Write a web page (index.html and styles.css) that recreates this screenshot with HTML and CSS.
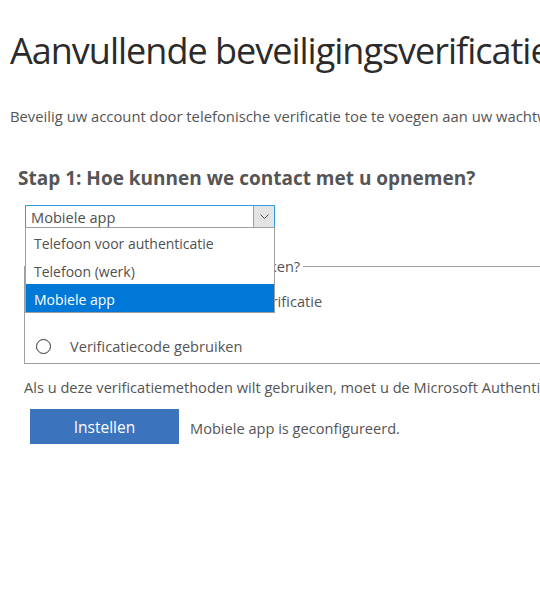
FILE: index.html
```html
<!DOCTYPE html>
<html lang="nl">
<head>
<meta charset="utf-8">
<title>Aanvullende beveiligingsverificatie</title>
<link rel="stylesheet" href="styles.css">
</head>
<body>
<main class="page">
  <h1 class="title">Aanvullende beveiligingsverificatie</h1>
  <p class="intro">Beveilig uw account door telefonische verificatie toe te voegen aan uw wachtwoord. Bekijk de video om te zien hoe u uw account beveiligt</p>

  <section class="step">
    <h2 class="step-title">Stap 1: Hoe kunnen we contact met u opnemen?</h2>

    <div class="picker">
      <div class="select">
        <span class="select-value">Mobiele app</span>
        <span class="select-arrow">
          <svg width="9" height="5" viewBox="0 0 9 5"><path d="M0.5 0.5l4 4 4-4" fill="none" stroke="#555" stroke-width="1"/></svg>
        </span>
      </div>
      <ul class="options">
        <li class="option">Telefoon voor authenticatie</li>
        <li class="option">Telefoon (werk)</li>
        <li class="option selected">Mobiele app</li>
      </ul>
    </div>

    <fieldset class="methods">
      <legend class="methods-legend">Hoe wilt u de mobiele app gebruiken?</legend>
      <label class="radio-row"><span class="radio"></span>Meldingen ontvangen voor verificatie</label>
      <label class="radio-row"><span class="radio"></span>Verificatiecode gebruiken</label>
    </fieldset>

    <p class="note">Als u deze verificatiemethoden wilt gebruiken, moet u de Microsoft Authenticator-app instellen.</p>

    <div class="actions">
      <button class="btn">Instellen</button>
      <span class="status">Mobiele app is geconfigureerd.</span>
    </div>
  </section>
</main>
</body>
</html>
```
FILE: styles.css
```css
html, body {
  margin: 0;
  padding: 0;
  background: #fff;
  overflow: hidden;
}
body {
  font-family: "Open Sans", "Noto Sans", sans-serif;
  color: #444;
  width: 540px;
  height: 603px;
}
.page {
  width: 900px;
  padding: 0 0 0 10px;
  white-space: nowrap;
}
.title {
  margin: 0;
  padding-top: 27px;
  font-size: 36px;
  font-weight: 400;
  line-height: 48px;
  color: #2b2b2b;
  letter-spacing: -1px;
}
.intro {
  margin: 32px 0 0 0;
  font-size: 14.8px;
  line-height: 18px;
  color: #555;
}
.step {
  padding-left: 8px;
}
.step-title {
  margin: 41px 0 0 0;
  font-size: 19px;
  line-height: 24px;
  font-weight: 700;
  color: #555;
}
.picker {
  position: relative;
  margin: 15px 0 0 7px;
  width: 250px;
  height: 23px;
}
.select {
  box-sizing: border-box;
  height: 23px;
  width: 250px;
  border: 1px solid #2b9de0;
  display: flex;
  align-items: center;
  justify-content: space-between;
  background: #fff;
}
.select-value {
  padding-left: 5px;
  font-size: 14.6px;
  color: #505050;
}
.select-arrow {
  width: 21px;
  height: 21px;
  box-sizing: border-box;
  border-left: 1px solid #a0a0a0;
  background: #e3e3e3;
  display: flex;
  align-items: center;
  justify-content: center;
}
.options {
  position: absolute;
  top: 22px;
  left: 0;
  width: 250px;
  box-sizing: border-box;
  margin: 0;
  padding: 0;
  list-style: none;
  border: 1px solid #a0a0a0;
  background: #fff;
  z-index: 5;
}
.option {
  box-sizing: border-box;
  height: 28px;
  padding: 3px 0 0 8px;
  line-height: 25px;
  font-size: 14px;
  color: #505050;
}
.option.selected {
  background: #0078d7;
  color: #fff;
}
.methods {
  display: flex;
  flex-direction: column;
  gap: 15px;
  margin: 28px 0 0 6px;
  padding: 10px 0 2px 10px;
  width: 700px;
  border: 1px solid #a0a0a0;
  border-right: none;
}
.methods-legend {
  margin-left: 6px;
  padding: 0 3px;
  font-size: 14.6px;
  color: #555;
}
.radio-row {
  display: flex;
  align-items: center;
  height: 30px;
  font-size: 14.6px;
  color: #555;
}
.radio {
  box-sizing: border-box;
  width: 15px;
  height: 15px;
  border: 1px solid #333;
  border-radius: 50%;
  margin: 0 19px 0 1px;
}
.note {
  margin: 13px 0 0 6px;
  font-size: 14.6px;
  line-height: 20px;
  color: #555;
}
.actions {
  display: flex;
  align-items: center;
  margin: 12px 0 0 12px;
}
.btn {
  width: 149px;
  height: 35px;
  padding-top: 2px;
  border: none;
  background: #3b74bd;
  color: #fff;
  font-family: inherit;
  font-size: 15.5px;
}
.status {
  margin-left: 11px;
  padding-top: 3px;
  font-size: 14.6px;
  color: #555;
}
```
